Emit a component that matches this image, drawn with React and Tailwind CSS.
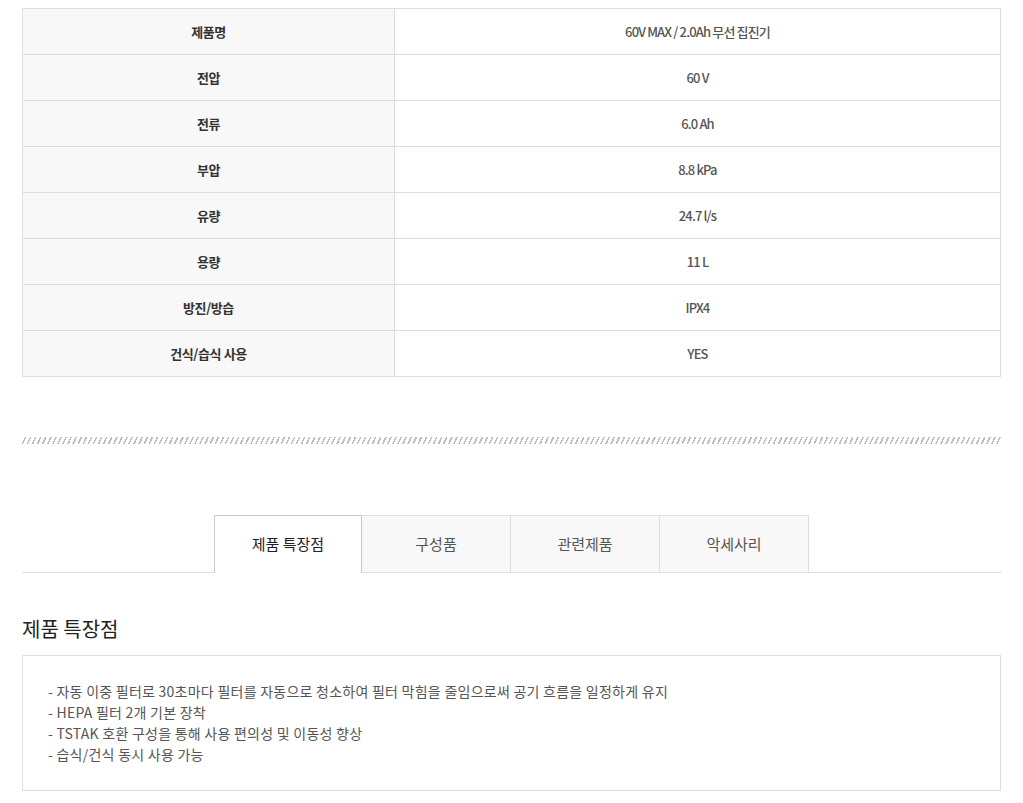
import React from 'react';

const specs = [
  ['제품명', '60V MAX / 2.0Ah 무선 집진기'],
  ['전압', '60 V'],
  ['전류', '6.0 Ah'],
  ['부압', '8.8 kPa'],
  ['유량', '24.7 l/s'],
  ['용량', '11 L'],
  ['방진/방습', 'IPX4'],
  ['건식/습식 사용', 'YES'],
];

const tabs = ['제품 특장점', '구성품', '관련제품', '악세사리'];

const features = [
  '- 자동 이중 필터로 30초마다 필터를 자동으로 청소하여 필터 막힘을 줄임으로써 공기 흐름을 일정하게 유지',
  '- HEPA 필터 2개 기본 장착',
  '- TSTAK 호환 구성을 통해 사용 편의성 및 이동성 향상',
  '- 습식/건식 동시 사용 가능',
];

const App = () => {
  return (
    <div className="bg-white min-h-[803px] px-[22px] pt-2 pb-3 font-['Noto_Sans_CJK_KR','Noto_Sans',sans-serif] text-[#333]">
      <table className="w-[979px] border-collapse border border-[#dddddd] text-[13px]">
        <tbody>
          {specs.map(([label, value]) => (
            <tr key={label} className="h-[46px]">
              <th className="w-[372px] border border-[#dddddd] bg-[#f8f8f8] font-bold text-[#333] text-center tracking-[-0.4px]">
                {label}
              </th>
              <td className="border border-[#dddddd] text-center font-medium text-[#555] tracking-[-0.85px]">{value}</td>
            </tr>
          ))}
        </tbody>
      </table>

      <div className="mt-[60px] h-[7px] w-[979px] bg-[repeating-linear-gradient(115deg,transparent_0px,transparent_2.5px,#bcbcbc_2.5px,#bcbcbc_4px,transparent_4px,transparent_4.6px)]" />

      <div className="mt-[71px] flex justify-center border-b border-[#dddddd] w-[979px]">
        {tabs.map((tab, i) => (
          <div
            key={tab}
            className={
              i === 0
                ? 'w-[148px] h-[58px] -mb-px flex items-center justify-center bg-white border border-b-0 border-[#c8c8c8] text-[15px] text-[#222]'
                : 'w-[149px] h-[57px] flex items-center justify-center bg-[#f8f8f8] border-t border-r border-[#dddddd] text-[15px] text-[#555]'
            }
          >
            {tab}
          </div>
        ))}
      </div>

      <h2 className="mt-[43px] text-[20px] leading-[26px] text-[#222] font-normal">제품 특장점</h2>

      <div className="mt-[13px] w-[979px] h-[136px] border border-[#dddddd] pl-[25px] pt-[25px] text-[14px] leading-[21px] text-[#555] tracking-[0.25px]">
        {features.map((f) => (
          <p key={f}>{f}</p>
        ))}
      </div>
    </div>
  );
};

export default App;
